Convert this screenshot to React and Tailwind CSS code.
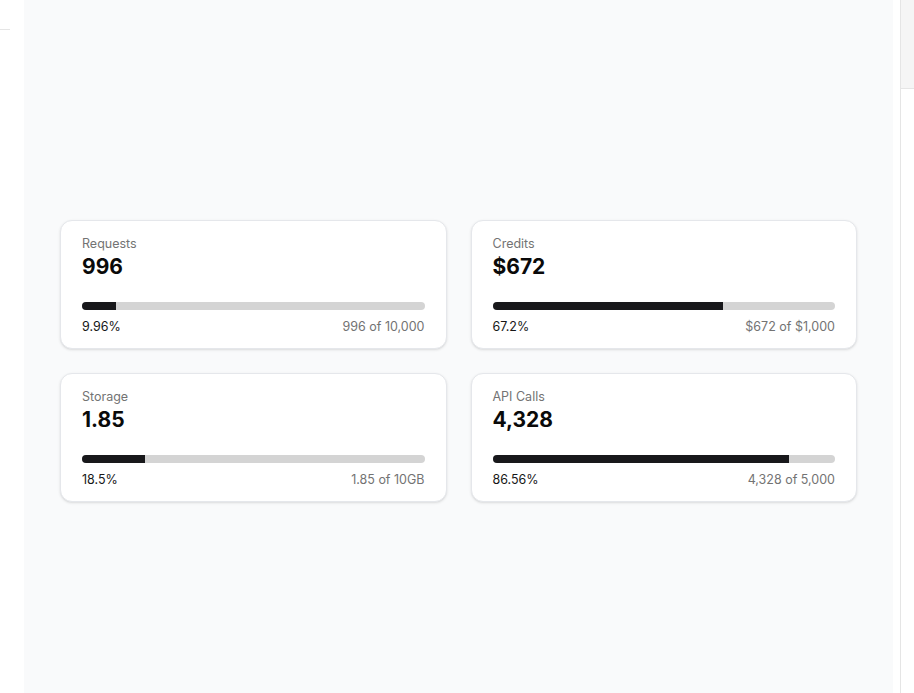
import React from 'react';

const stats = [
  { label: 'Requests', value: '996', pct: 9.96, pctText: '9.96%', detail: '996 of 10,000' },
  { label: 'Credits', value: '$672', pct: 67.2, pctText: '67.2%', detail: '$672 of $1,000' },
  { label: 'Storage', value: '1.85', pct: 18.5, pctText: '18.5%', detail: '1.85 of 10GB' },
  { label: 'API Calls', value: '4,328', pct: 86.56, pctText: '86.56%', detail: '4,328 of 5,000' },
];

function UsageCard({ stat }) {
  return (
    <div className="bg-white rounded-xl border border-gray-200 shadow-sm px-[21px] pt-[15px] pb-[13px]">
      <p className="text-[12.5px] leading-4 text-neutral-500">{stat.label}</p>
      <p className="mt-[1px] text-[21px] leading-7 font-bold text-neutral-950">{stat.value}</p>
      <div className="mt-[21px] h-2 w-full rounded-full bg-neutral-300 overflow-hidden">
        <div className="h-full bg-zinc-900" style={{ width: `${stat.pct}%` }} />
      </div>
      <div className="mt-[9px] flex justify-between text-[12.5px] leading-4">
        <span className="text-neutral-900">{stat.pctText}</span>
        <span className="text-neutral-500">{stat.detail}</span>
      </div>
    </div>
  );
}

export default function App() {
  return (
    <div className="flex h-[693px] w-[914px] overflow-hidden bg-white" style={{ fontFamily: 'Inter, "Noto Sans", sans-serif' }}>
      <div className="w-6 shrink-0">
        <div className="mt-[29px] h-px w-2.5 bg-neutral-200" />
      </div>
      <main className="flex-1 bg-gray-50 px-9 pt-[220px]">
        <div className="grid grid-cols-2 gap-6">
          {stats.map((s) => (
            <UsageCard key={s.label} stat={s} />
          ))}
        </div>
      </main>
      <div className="w-[7px] shrink-0 bg-white" />
      <div className="w-[14px] shrink-0 border-l border-neutral-200">
        <div className="h-[89px] bg-neutral-100 border-b border-neutral-200" />
      </div>
    </div>
  );
}
